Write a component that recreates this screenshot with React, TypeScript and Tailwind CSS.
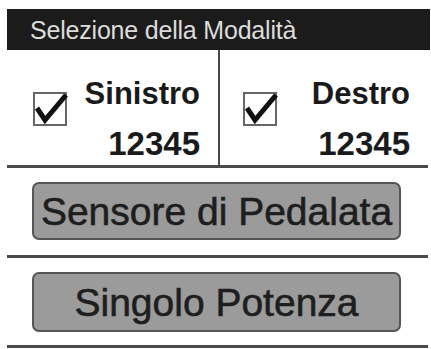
import * as React from "react"

function CheckBox() {
    return (
        <div className="relative w-[34px] h-[34px] border-2 border-[#666] bg-white shrink-0">
            <svg
                className="absolute -left-[2px] -top-[2px] overflow-visible"
                width="34"
                height="34"
                viewBox="0 0 34 34"
            >
                <path
                    d="M4 16 L12 28 L33 3"
                    fill="none"
                    stroke="#111"
                    strokeWidth="5"
                    strokeLinecap="butt"
                    strokeLinejoin="miter"
                />
            </svg>
        </div>
    )
}

function SideCell({ label, value, pad }: { label: string; value: string; pad: string }) {
    return (
        <div className={`flex flex-1 items-start pt-[28px] pr-[18px] ${pad}`}>
            <div className="mt-[14px]">
                <CheckBox />
            </div>
            <div className="flex-1 flex flex-col items-end font-bold text-[#1a1a1a]">
                <span className="text-[31px] leading-[31px]">{label}</span>
                <span className="text-[33px] leading-[33px] mt-[18px]">{value}</span>
            </div>
        </div>
    )
}

function ModeButton({ children, height }: { children: React.ReactNode; height: string }) {
    return (
        <div
            className={`ml-[25px] w-[369px] ${height} rounded-[7px] border-2 border-[#555] bg-[#9b9b9b] flex items-center justify-center text-[39px] leading-none text-[#1e1e1e] [-webkit-text-stroke:0.6px_#1e1e1e]`}
        >
            {children}
        </div>
    )
}

export default function App() {
    return (
        <div
            className="w-[431px] h-[349px] bg-white pt-[9px] pl-[7px] pr-[3px] overflow-hidden"
            style={{ fontFamily: '"Liberation Sans", Arial, sans-serif' }}
        >
            <div className="h-[41px] bg-[#1b1b1b] pl-[23px] pt-[2px] text-[25px] leading-[39px] text-[#dcdcdc] tracking-[-0.2px] mr-[-2px]">
                Selezione della Modalità
            </div>

            <div className="flex h-[118px] border-b-[3px] border-[#4a4a4a]">
                <div className="w-[213px] border-r-2 border-[#4a4a4a] flex">
                    <SideCell label="Sinistro" value="12345" pad="pl-[26px]" />
                </div>
                <SideCell label="Destro" value="12345" pad="pl-[23px]" />
            </div>

            <div className="h-[90px] pt-[14px] border-b-[3px] border-[#4a4a4a]">
                <ModeButton height="h-[58px]">Sensore di Pedalata</ModeButton>
            </div>

            <div className="h-[90px] pt-[14px] border-b-[3px] border-[#4a4a4a]">
                <ModeButton height="h-[60px]">Singolo Potenza</ModeButton>
            </div>
        </div>
    )
}
